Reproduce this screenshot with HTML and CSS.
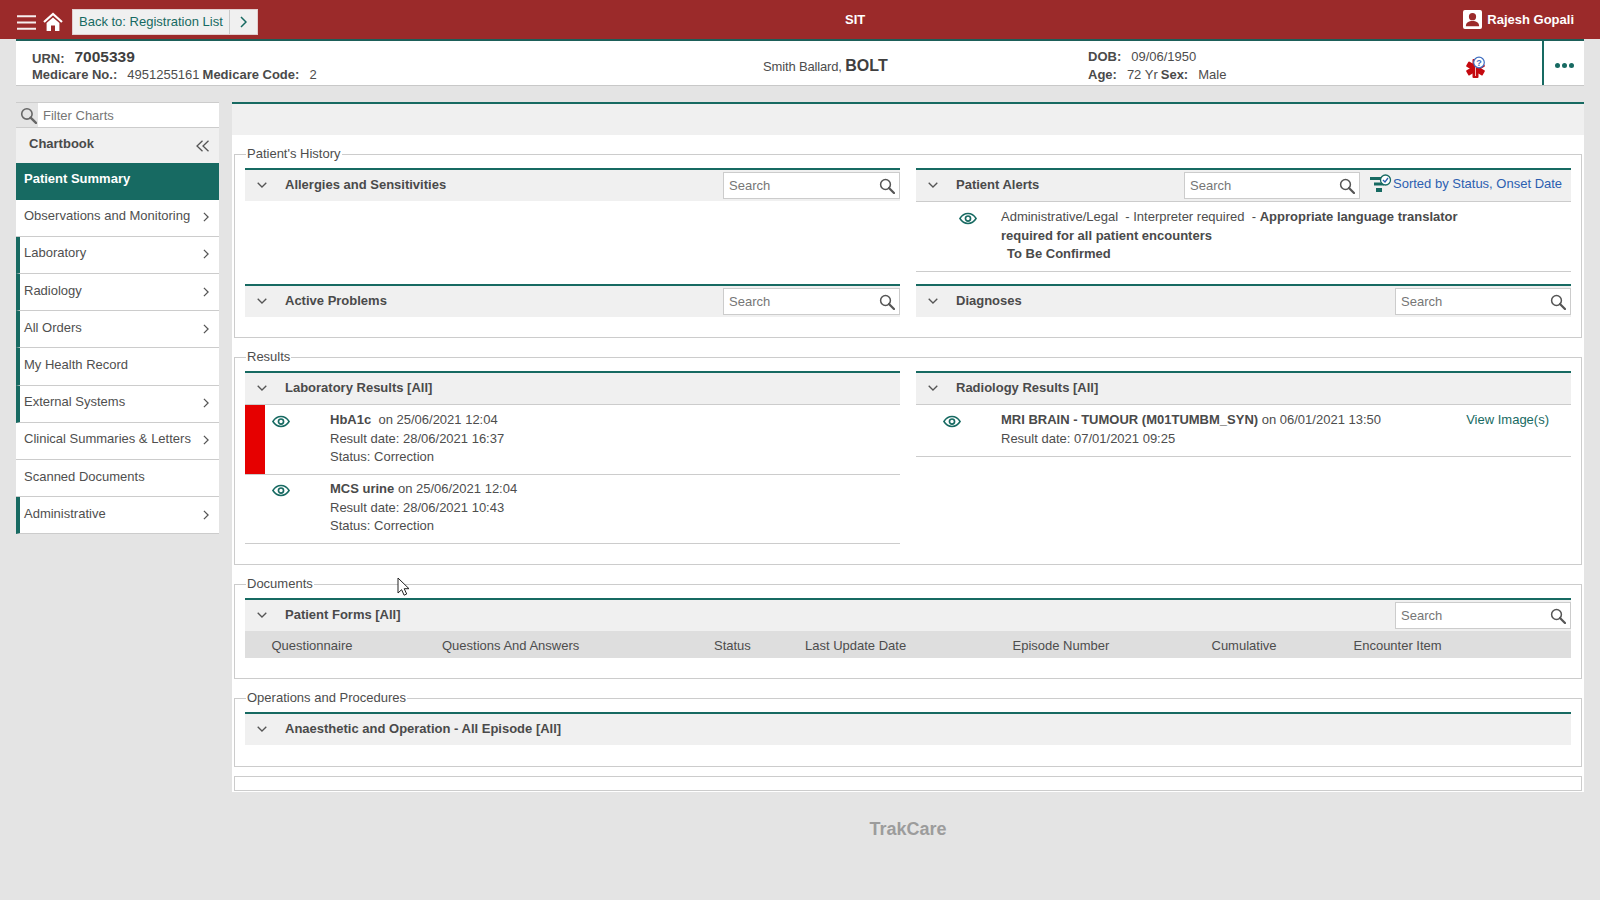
FILE: index.html
```html
<!DOCTYPE html>
<html lang="en">
<head>
<meta charset="utf-8">
<title>TrakCare - Patient Summary</title>
<link rel="stylesheet" href="styles.css">
</head>
<body>
<svg class="defs" width="0" height="0" aria-hidden="true">
  <symbol id="i-search" viewBox="0 0 16 16"><circle cx="6.5" cy="6.5" r="4.9" fill="none" stroke="currentColor" stroke-width="1.5"/><path d="M10 10l5 5" stroke="currentColor" stroke-width="2.2" stroke-linecap="round"/></symbol>
  <symbol id="i-eye" viewBox="0 0 24 16"><path d="M1.2 8C4 3.6 7.8 1.4 12 1.4S20 3.6 22.8 8C20 12.4 16.2 14.6 12 14.6S4 12.4 1.2 8z" fill="none" stroke="currentColor" stroke-width="2"/><circle cx="12" cy="8" r="3.4" fill="none" stroke="currentColor" stroke-width="2.2"/></symbol>
  <symbol id="i-down" viewBox="0 0 10 6"><path d="M.7.7L5 5l4.3-4.3" fill="none" stroke="currentColor" stroke-width="1.3"/></symbol>
  <symbol id="i-right" viewBox="0 0 7 12"><path d="M1 1l5 5-5 5" fill="none" stroke="currentColor" stroke-width="1.5"/></symbol>
</svg>

<header class="topbar">
  <div class="tb-left">
    <svg class="burger" viewBox="0 0 19 15"><path d="M0 1.2h19M0 7.5h19M0 13.8h19" stroke="#f6eeee" stroke-width="2"/></svg>
    <svg class="home" viewBox="0 0 20 19"><path d="M1 10l9-8 9 8" fill="none" stroke="#fff" stroke-width="2.2"/><path d="M3.6 11L10 5.4 16.4 11v8H12v-5.5H8V19H3.6z" fill="#fff"/></svg>
    <div class="backbtn"><span class="backlabel">Back to: Registration List</span><span class="backarrow"><svg class="ic-right" ><use href="#i-right"/></svg></span></div>
  </div>
  <div class="sit">SIT</div>
  <div class="user">
    <svg class="usericon" viewBox="0 0 20 20"><rect width="20" height="20" rx="2" fill="#fff"/><circle cx="10" cy="7" r="3.8" fill="#9b2a2a"/><path d="M3 17c0-4 3-5.500 7-5.500s7 1.500 7 5.500z" fill="#9b2a2a"/></svg>
    <span>Rajesh Gopali</span>
  </div>
</header>

<section class="patient">
  <div class="p-ids">
    <div class="p-line"><b class="soft">URN:</b><b class="urn">7005339</b></div>
    <div class="p-line"><b class="soft">Medicare No.:</b><span class="val">4951255161</span><b class="soft tight">Medicare Code:</b><span class="val">2</span></div>
  </div>
  <div class="p-name">Smith Ballard, <b>BOLT</b></div>
  <div class="p-demo">
    <div class="p-line"><b class="soft">DOB:</b><span class="val">09/06/1950</span></div>
    <div class="p-line"><b class="soft">Age:</b><span class="val">72 Yr</span><b class="soft tight">Sex:</b><span class="val">Male</span></div>
  </div>
  <div class="p-alert">
    <svg class="star" viewBox="0 0 24 24">
      <g fill="#c5090f"><rect x="8.500" y="3" width="6" height="19" rx="1"/><rect x="8.500" y="3" width="6" height="19" rx="1" transform="rotate(60 11.500 12.500)"/><rect x="8.500" y="3" width="6" height="19" rx="1" transform="rotate(120 11.500 12.500)"/></g>
      <path d="M11.500 10v10" stroke="#f4b5b5" stroke-width="1"/>
      <circle cx="15" cy="6.500" r="5.300" fill="#fff" stroke="#3f6ec0" stroke-width="1.200"/>
      <text x="15" y="9.700" class="qmark">?</text>
    </svg>
  </div>
  <div class="p-more"><i></i><i></i><i></i></div>
</section>

<div class="layout">
  <nav class="sidebar">
    <div class="filter">
      <span class="filter-ic"><svg class="ic-search big"><use href="#i-search"/></svg></span>
      <input class="filter-in" type="text" placeholder="Filter Charts">
    </div>
    <div class="chartbook"><span>Chartbook</span><svg class="dbl" viewBox="0 0 13 12"><path d="M6.500.8L1 6l5.500 5.200M12.500.8L7 6l5.500 5.200" fill="none" stroke="#555" stroke-width="1.300"/></svg></div>
    <a class="nav active">Patient Summary</a>
    <a class="nav">Observations and Monitoring<svg class="ic-right"><use href="#i-right"/></svg></a>
    <a class="nav flag">Laboratory<svg class="ic-right"><use href="#i-right"/></svg></a>
    <a class="nav flag">Radiology<svg class="ic-right"><use href="#i-right"/></svg></a>
    <a class="nav flag">All Orders<svg class="ic-right"><use href="#i-right"/></svg></a>
    <a class="nav flag">My Health Record</a>
    <a class="nav flag">External Systems<svg class="ic-right"><use href="#i-right"/></svg></a>
    <a class="nav">Clinical Summaries &amp; Letters<svg class="ic-right"><use href="#i-right"/></svg></a>
    <a class="nav">Scanned Documents</a>
    <a class="nav flag">Administrative<svg class="ic-right"><use href="#i-right"/></svg></a>
  </nav>

  <main class="main">
    <div class="band"></div>
    <div class="panel">

      <fieldset class="group compact">
        <legend>Patient's History</legend>
        <div class="two">
          <div class="tall">
            <div class="sec-head"><svg class="ic-down"><use href="#i-down"/></svg><span class="title">Allergies and Sensitivities</span>
              <label class="search"><input type="text" placeholder="Search"><svg class="ic-search"><use href="#i-search"/></svg></label></div>
          </div>
          <div class="tall">
            <div class="sec-head ruled"><svg class="ic-down"><use href="#i-down"/></svg><span class="title">Patient Alerts</span>
              <label class="search narrow"><input type="text" placeholder="Search"><svg class="ic-search"><use href="#i-search"/></svg></label>
              <span class="sorted">
                <svg class="sort-ic" viewBox="0 0 22 20"><g fill="#176a62"><rect x="0" y="3" width="13" height="3"/><rect x="4" y="8.500" width="10" height="3"/><rect x="6" y="14" width="6" height="4"/></g><circle cx="15.500" cy="6" r="5" fill="#fff" stroke="#176a62" stroke-width="1.300"/><path d="M13 6l2 2 3-4" fill="none" stroke="#2c5fb0" stroke-width="1.300"/></svg>
                Sorted by Status, Onset Date</span></div>
            <div class="row alert">
              <svg class="eye"><use href="#i-eye"/></svg>
              <div class="row-text">Administrative/Legal &nbsp;- Interpreter required &nbsp;- <b class="soft">Appropriate language translator</b><br><b class="soft">required for all patient encounters</b><br><b class="soft indent">To Be Confirmed</b></div>
            </div>
          </div>
          <div class="sec-head"><svg class="ic-down"><use href="#i-down"/></svg><span class="title">Active Problems</span>
            <label class="search"><input type="text" placeholder="Search"><svg class="ic-search"><use href="#i-search"/></svg></label></div>
          <div class="sec-head"><svg class="ic-down"><use href="#i-down"/></svg><span class="title">Diagnoses</span>
            <label class="search narrow"><input type="text" placeholder="Search"><svg class="ic-search"><use href="#i-search"/></svg></label></div>
        </div>
      </fieldset>

      <fieldset class="group compact">
        <legend>Results</legend>
        <div class="two">
          <div>
            <div class="sec-head ruled"><svg class="ic-down"><use href="#i-down"/></svg><span class="title">Laboratory Results [All]</span></div>
            <div class="row result first">
              <span class="mark red"></span>
              <svg class="eye"><use href="#i-eye"/></svg>
              <div class="row-text"><b class="soft">HbA1c</b> &nbsp;on 25/06/2021 12:04<br>Result date: 28/06/2021 16:37<br>Status: Correction</div>
            </div>
            <div class="row result second">
              <span class="mark"></span>
              <svg class="eye"><use href="#i-eye"/></svg>
              <div class="row-text"><b class="soft">MCS urine</b> on 25/06/2021 12:04<br>Result date: 28/06/2021 10:43<br>Status: Correction</div>
            </div>
          </div>
          <div>
            <div class="sec-head ruled"><svg class="ic-down"><use href="#i-down"/></svg><span class="title">Radiology Results [All]</span></div>
            <div class="row result short">
              <span class="mark"></span>
              <svg class="eye"><use href="#i-eye"/></svg>
              <div class="row-text grow"><b class="soft">MRI BRAIN - TUMOUR (M01TUMBM_SYN)</b> on 06/01/2021 13:50<br>Result date: 07/01/2021 09:25</div>
              <a class="view">View Image(s)</a>
            </div>
          </div>
        </div>
      </fieldset>

      <fieldset class="group compact">
        <legend>Documents</legend>
        <div class="sec-head"><svg class="ic-down"><use href="#i-down"/></svg><span class="title">Patient Forms [All]</span>
          <label class="search narrow"><input type="text" placeholder="Search"><svg class="ic-search"><use href="#i-search"/></svg></label></div>
        <div class="thead">
          <span>Questionnaire</span><span>Questions And Answers</span><span>Status</span><span>Last Update Date</span><span>Episode Number</span><span>Cumulative</span><span>Encounter Item</span>
        </div>
      </fieldset>

      <fieldset class="group">
        <legend>Operations and Procedures</legend>
        <div class="sec-head"><svg class="ic-down"><use href="#i-down"/></svg><span class="title">Anaesthetic and Operation - All Episode [All]</span></div>
      </fieldset>

      <div class="emptybox"></div>
    </div>
    <footer class="brand">TrakCare</footer>
  </main>
</div>

<svg class="cursor" viewBox="0 0 13 19"><path d="M1 1v15l3.600-3.300 2.500 5.500 2.600-1.200-2.500-5.300H12z" fill="#fff" stroke="#222" stroke-width="1"/></svg>
</body>
</html>
```

FILE: styles.css
```css
* { box-sizing: border-box; }
html, body { margin: 0; padding: 0; background: #e4e4e4; }
body {
  font-family: "Liberation Sans", Arial, sans-serif;
  font-size: 13px;
  color: #4d4d4d;
  line-height: 18px;
  position: relative;
  min-height: 900px;
  overflow: hidden;
}
.defs { position: absolute; }
b { font-weight: 700; }
.soft { color: #4a4a4a; }

/* top bar */
.topbar {
  height: 39px;
  background: #9b2a2a;
  display: flex;
  align-items: center;
  padding: 0 26px 0 17px;
  color: #fff;
}
.tb-left { width: 828px; display: flex; align-items: center; padding-top: 5px; }
.burger { width: 19px; height: 15px; }
.home { width: 20px; height: 19px; margin-left: 7px; margin-top: -1px; }
.backbtn {
  margin-left: 9px;
  height: 26px;
  width: 186px;
  background: #f0f0f0;
  border: 1px solid #e2cfcf;
  display: flex;
  color: #176a62;
  line-height: 24px;
}
.backlabel { width: 157px; padding-left: 6px; border-right: 1px solid #c9c9c9; white-space: nowrap; }
.backarrow { flex: 1; display: flex; align-items: center; justify-content: center; }
.sit { font-weight: 700; width: 20px; }
.user { margin-left: auto; display: flex; align-items: center; gap: 5px; font-weight: 700; }
.usericon { width: 19px; height: 19px; }

/* patient bar */
.patient {
  margin: 0 16px;
  height: 47px;
  background: #fff;
  border-top: 2px solid #1d5f59;
  border-bottom: 1px solid #c8c8c8;
  display: flex;
  align-items: stretch;
}
.p-ids { width: 747px; padding: 7px 0 0 16px; }
.p-demo { width: 376px; padding: 7px 0 0 0; }
.p-line { height: 18px; white-space: nowrap; }
.urn { font-size: 15.500px; margin-left: 10px; color: #3f3f3f; vertical-align: 1px; }
.val { margin-left: 10px; }
.tight { margin-left: 3px; }
.p-name { width: 325px; padding-top: 16px; white-space: nowrap; letter-spacing: -0.15px; }
.p-name b { font-size: 16px; color: #3f3f3f; letter-spacing: 0; }
.p-alert { width: 78px; padding-top: 15px; }
.star { display: block; width: 24px; height: 24px; }
.qmark { font-size: 9px; font-weight: 700; fill: #3f6ec0; text-anchor: middle; }
.p-more {
  flex: 1;
  border-left: 2px solid #176a62;
  display: flex;
  align-items: center;
  justify-content: center;
  gap: 2px;
  padding-top: 5px;
}
.p-more i { width: 5px; height: 5px; border-radius: 50%; background: #176a62; }

/* layout */
.layout { display: flex; gap: 13px; padding: 0 16px; align-items: flex-start; }

/* sidebar */
.sidebar { width: 203px; margin-top: 16px; flex: none; }
.filter {
  height: 26px;
  display: flex;
  border-top: 1px solid #ccc;
  border-bottom: 1px solid #ccc;
}
.filter-ic { width: 22px; display: flex; align-items: center; justify-content: flex-end; padding-right: 1px; color: #666; }
.filter-in { flex: 1; min-width: 0; border: 0; background: #fff; padding: 0 5px; font: 13px "Liberation Sans", Arial, sans-serif; outline: 0; }
.filter-in::placeholder, .search input::placeholder { color: #767676; opacity: 1; }
.chartbook {
  height: 35px;
  background: #f0f0f0;
  display: flex;
  align-items: center;
  justify-content: space-between;
  padding: 0 10px 4px 13px;
  font-weight: 700;
  color: #4a4a4a;
}
.dbl { width: 13px; height: 12px; margin-top: 5px; }
.nav {
  height: 37.200px;
  display: flex;
  justify-content: space-between;
  background: #fff;
  border-bottom: 1px solid #ccc;
  padding: 7.500px 10px 0 8px;
  white-space: nowrap;
  color: #4f4f4f;
}
.nav .ic-right { width: 6px; height: 10px; margin-top: 5px; color: #555; }
.nav.flag { border-left: 4px solid #176a62; padding-left: 4px; }
.nav.active { background: #176a62; color: #fff; font-weight: 700; height: 36.700px; border-bottom: 0; padding-top: 7px; }
.ic-right { width: 7px; height: 12px; flex: none; }
.ic-search { width: 16px; height: 16px; color: #555; flex: none; }
.ic-search.big { width: 17px; height: 17px; color: #666; }
.ic-down { width: 10px; height: 6px; color: #555; margin: -1px 18px 0 12px; flex: none; }

/* main */
.main { flex: 1; min-width: 0; margin-top: 16px; }
.band { height: 33px; background: #f0f0f0; border-top: 2px solid #176a62; }
.panel { background: #fff; padding: 9px 2px 1px 2px; }

.group {
  margin: 0 0 9px;
  padding: 4px 10px 21px 10px;
  border: 1px solid #ccc;
  min-width: 0;
}
.group.compact { padding-bottom: 20px; }
.group legend {
  height: 20px;
  line-height: 20px;
  margin-left: 1px;
  padding: 0 1px;
}
.emptybox { height: 15px; border: 1px solid #ccc; }

.two { display: grid; grid-template-columns: 655px 655px; column-gap: 16px; }
.tall { height: 116px; }

.sec-head {
  height: 33px;
  border-top: 2px solid #176a62;
  background: #f0f0f0;
  display: flex;
  align-items: center;
}
.sec-head.ruled { height: 34px; border-bottom: 1px solid #ccc; }
.title { flex: 1; font-weight: 700; color: #4a4a4a; margin-top: -2px; white-space: nowrap; }

.search {
  width: 177px;
  height: 27px;
  background: #fff;
  border: 1px solid #ccc;
  display: flex;
  align-items: center;
  padding-right: 4px;
  flex: none;
}
.search.narrow { width: 176px; }
.search input { flex: 1; min-width: 0; border: 0; background: transparent; padding: 0 0 0 5px; font: 13px "Liberation Sans", Arial, sans-serif; outline: 0; }

.sorted { width: 211px; flex: none; color: #2c5fb0; white-space: nowrap; display: flex; align-items: center; gap: 0; padding-left: 10px; margin-top: -3px; }
.sort-ic { width: 22px; height: 20px; flex: none; margin-right: 1px; }

.row { display: flex; border-bottom: 1px solid #ccc; }
.row.alert { height: 70px; padding: 6px 0 0 43px; }
.row.alert .eye { margin: 4px 24px 0 0; }
.row.result { height: 69px; }
.row.result.first { height: 70px; }
.row.result.short { height: 52px; }
.mark { width: 20px; flex: none; }
.mark.red { background: #e60000; }
.eye { width: 18px; height: 13px; color: #176a62; flex: none; }
.result .eye { margin: 10px 40px 0 7px; }
.row-text { line-height: 18.500px; padding-top: 6px; white-space: nowrap; }
.row.alert .row-text { padding-top: 0; }
.row.second .row-text { padding-top: 5px; }
.row.second .eye { margin-top: 9px; }
.indent { margin-left: 6px; }
.grow { flex: 1; }
.view { color: #176a62; padding: 6px 22px 0 0; line-height: 18.500px; white-space: nowrap; }

.thead {
  height: 27px;
  background: #dedede;
  display: grid;
  grid-template-columns: 170.500px 272px 91px 207.500px 199px 142px 1fr;
  padding: 3px 0 0 26.500px;
  align-items: center;
  white-space: nowrap;
}

.brand {
  margin-top: 26px;
  text-align: center;
  font-size: 18px;
  font-weight: 700;
  line-height: 22px;
  color: #9c9c9c;
}

.cursor { position: absolute; left: 397px; top: 577px; width: 13px; height: 19px; }
```
